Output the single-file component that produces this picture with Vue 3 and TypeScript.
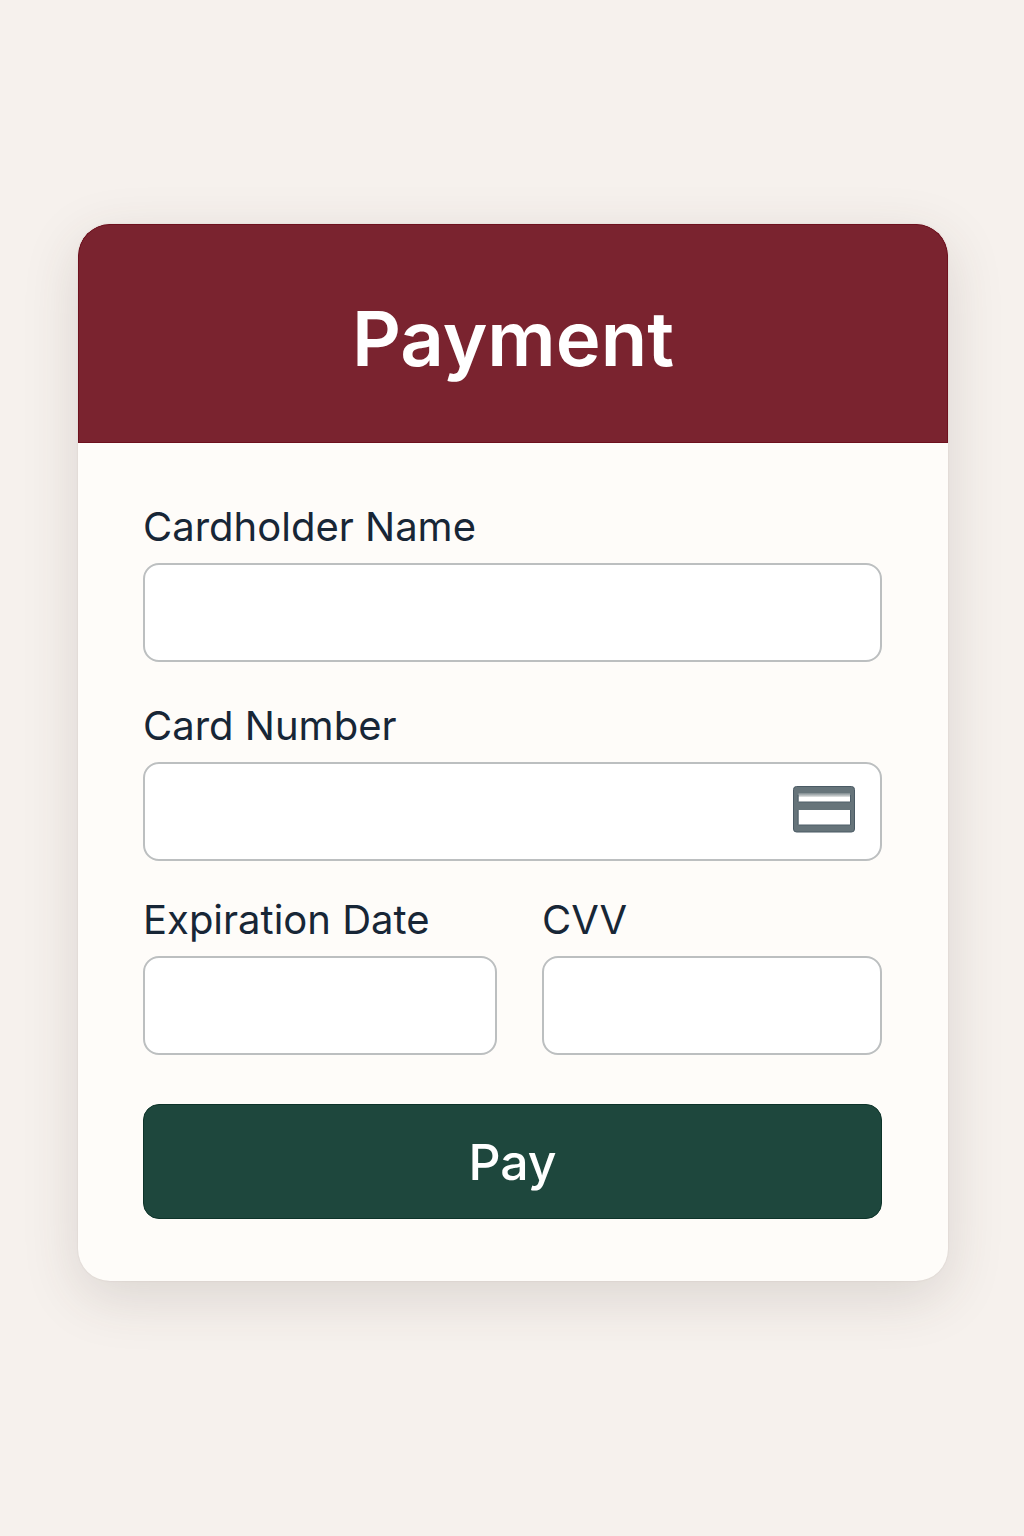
<script setup lang="ts">
import { reactive } from 'vue'

const form = reactive({ name: '', number: '', expiry: '', cvv: '' })
</script>

<template>
  <main class="page">
    <section class="card" aria-labelledby="payment-title">
      <header class="card-header">
        <h1 id="payment-title">Payment</h1>
      </header>
      <form class="card-body" @submit.prevent>
        <div class="field name-field">
          <label for="name">Cardholder Name</label>
          <input id="name" v-model="form.name" type="text" autocomplete="cc-name" />
        </div>
        <div class="field">
          <label for="number">Card Number</label>
          <div class="input-wrap">
            <input id="number" v-model="form.number" type="text" inputmode="numeric" autocomplete="cc-number" />
            <svg class="card-icon" viewBox="0 0 64 48" aria-hidden="true">
              <defs>
                <linearGradient id="slot" x1="0" y1="0" x2="0" y2="1">
                  <stop offset="0" stop-color="#7d898e" />
                  <stop offset="0.35" stop-color="#c9cdce" />
                  <stop offset="0.5" stop-color="#ffffff" />
                </linearGradient>
              </defs>
              <rect x="1.5" y="1.5" width="61" height="45.5" rx="3" fill="#66747a" stroke="#4a5a64" />
              <rect x="6.5" y="8" width="51.5" height="9" fill="url(#slot)" />
              <rect x="6.5" y="25" width="51.5" height="15" fill="#ffffff" />
              <path d="M6.5 17H58M6.5 40H58M6 10v7M58.5 10v7M6 25v15M58.5 25v15" fill="none" stroke="#4f5f69" />
            </svg>
          </div>
        </div>
        <div class="row">
          <div class="field">
            <label for="expiry">Expiration Date</label>
            <input id="expiry" v-model="form.expiry" type="text" autocomplete="cc-exp" />
          </div>
          <div class="field">
            <label for="cvv">CVV</label>
            <input id="cvv" v-model="form.cvv" type="text" inputmode="numeric" autocomplete="cc-csc" />
          </div>
        </div>
        <button class="pay" type="submit">Pay</button>
      </form>
    </section>
  </main>
</template>

<style>
body {
  background: #f6f1ed;
}
</style>

<style scoped>
.page {
  box-sizing: border-box;
  min-height: 100vh;
  padding: 224px 76px 240px 78px;
  font-family: Inter, "Liberation Sans", sans-serif;
  color: #172636;
}
.card {
  border-radius: 32px;
  overflow: hidden;
  background: #fefcf9;
  box-shadow: 0 16px 56px rgba(70, 55, 45, 0.15), 0 0 2px rgba(70, 50, 40, 0.12);
}
.card-header {
  padding: 66px 24px 57px;
  border-radius: 32px 32px 0 0;
  background: #7a232f;
  box-shadow: inset 0 0 0 1px #6d111e;
  color: #ffffff;
  text-align: center;
}
h1 {
  margin: 0;
  font-size: 76px;
  font-weight: 600;
  line-height: 96px;
}
.card-body {
  display: flex;
  flex-direction: column;
  gap: 35px;
  padding: 60px 66px 62px 65px;
}
.field {
  display: flex;
  flex-direction: column;
  gap: 12px;
}
.name-field {
  margin-bottom: 5px;
}
label {
  font-size: 40px;
  line-height: 48px;
}
input {
  box-sizing: border-box;
  width: 100%;
  height: 99px;
  padding: 0 24px;
  border: 2px solid #bcbfc0;
  border-radius: 16px;
  background: #ffffff;
  color: inherit;
  font: inherit;
  font-size: 40px;
}
.input-wrap {
  position: relative;
  display: flex;
}
.card-icon {
  position: absolute;
  right: 26px;
  top: 23px;
  width: 64px;
  height: 48px;
}
.row {
  display: grid;
  grid-template-columns: 354fr 340fr;
  gap: 45px;
}
.pay {
  height: 115px;
  margin-top: 14px;
  border: 1px solid #0d3329;
  border-radius: 16px;
  background: #1e473d;
  color: #ffffff;
  font: inherit;
  font-size: 50px;
  font-weight: 500;
}
</style>
